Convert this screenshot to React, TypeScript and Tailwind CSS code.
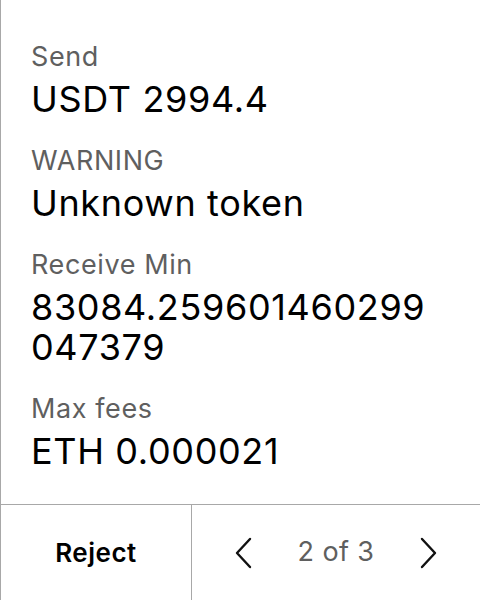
import React from "react";

const rows = [
  { label: "Send", value: "USDT 2994.4" },
  { label: "WARNING", value: "Unknown token" },
  { label: "Receive Min", value: "83084.259601460299047379" },
  { label: "Max fees", value: "ETH 0.000021" },
];

function Chevron({ dir }: { dir: "left" | "right" }) {
  return (
    <svg width="18" height="32" viewBox="0 0 18 32" fill="none">
      <polyline
        points={dir === "left" ? "16,2 3,16 16,30" : "2,2 15,16 2,30"}
        stroke="#111"
        strokeWidth="2.4"
        strokeLinecap="round"
        strokeLinejoin="round"
      />
    </svg>
  );
}

export default function App() {
  return (
    <div
      className="w-[480px] h-[600px] bg-white border-l border-[#a8a8a8] flex flex-col"
      style={{ fontFamily: "Inter, 'Noto Sans', sans-serif" }}
    >
      <div className="flex-1 flex flex-col gap-[26px] pt-[41px] pl-[30px] pr-[40px]">
        {rows.map((r) => (
          <div key={r.label} className="flex flex-col gap-[6px]">
            <div className="text-[27px] leading-[32px] tracking-[0.6px] text-[#5f5f5f]">{r.label}</div>
            <div className="text-[36px] leading-[40px] tracking-[0.65px] text-black break-all">{r.value}</div>
          </div>
        ))}
      </div>
      <div className="h-[96px] border-t border-[#a8a8a8] flex">
        <div className="w-[191px] border-r border-[#a8a8a8] flex items-center justify-center">
          <span className="text-[26px] tracking-[0.5px] font-semibold text-black">Reject</span>
        </div>
        <div className="flex-1 flex items-center justify-between px-[42px]">
          <Chevron dir="left" />
          <span className="text-[27px] tracking-[0.4px] text-[#5f5f5f]">2 of 3</span>
          <Chevron dir="right" />
        </div>
      </div>
    </div>
  );
}
